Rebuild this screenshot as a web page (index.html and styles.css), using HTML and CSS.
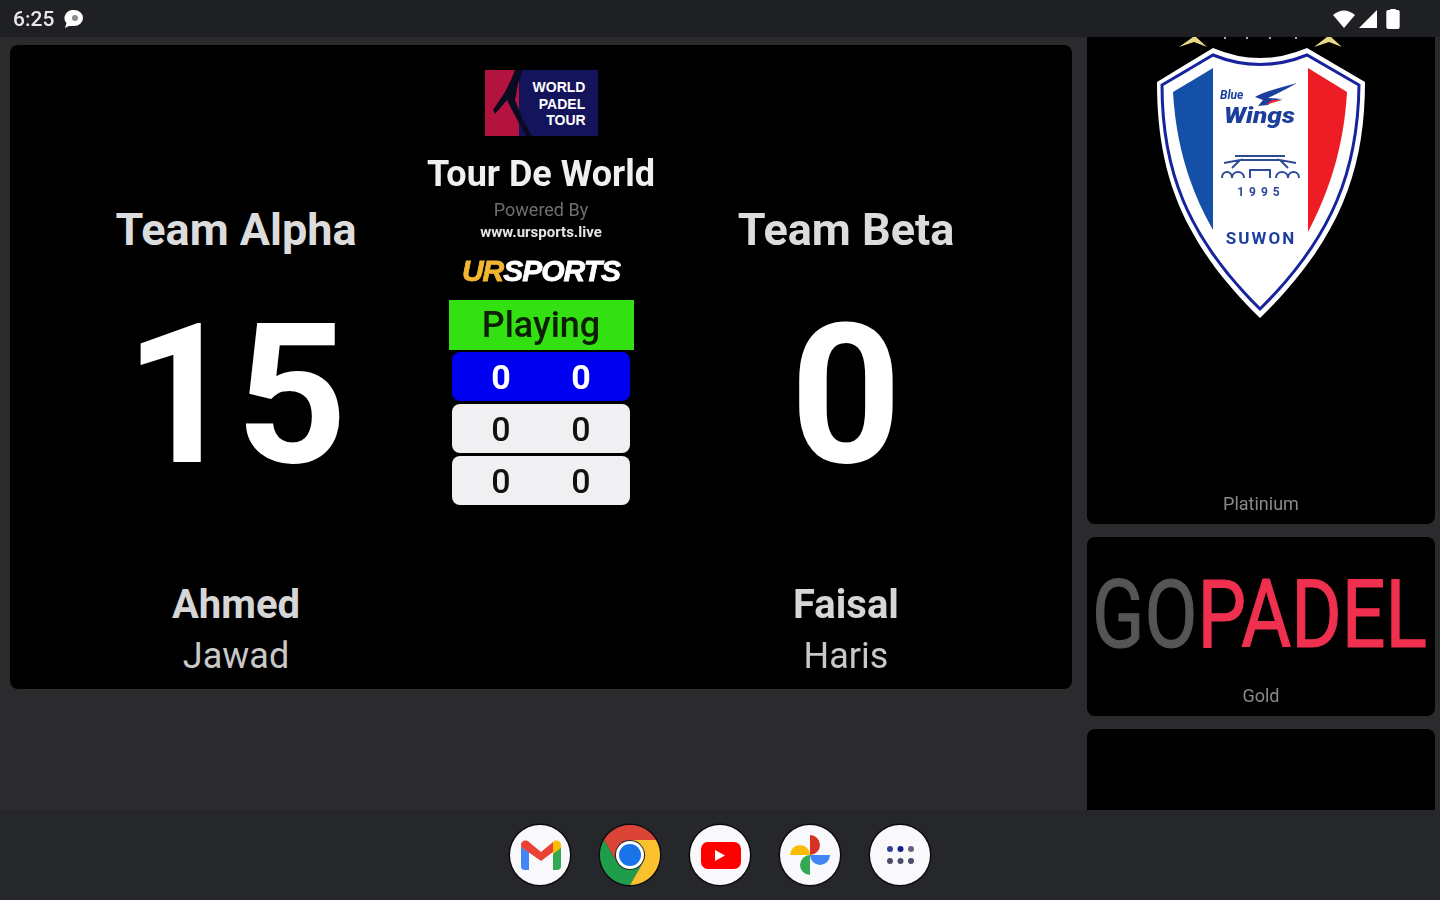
FILE: index.html
```html
<!DOCTYPE html>
<html lang="en">
<head>
  <meta charset="UTF-8" />
  <meta name="viewport" content="width=device-width, initial-scale=1.0" />
  <title>Scoreboard</title>
  <link rel="stylesheet" href="styles.css">
</head>
<body>
  <header class="status-bar">
    <div class="status-left">
      <span class="time">6:25</span>
      <svg class="chat-icon" viewBox="0 0 20 18">
        <path d="M10 0a9 8 0 0 1 0 16H5l-4 2 1.500-5A9 8 0 0 1 10 0z" fill="#fff"/>
        <circle cx="11" cy="8" r="3" fill="#8a8a8a"/>
      </svg>
    </div>
    <div class="status-right">
      <svg class="wifi-icon" viewBox="0 0 24 20"><path d="M1 6Q12-3 23 6L12 19Z" fill="#fff"/></svg>
      <svg class="signal-icon" viewBox="0 0 20 20"><path d="M19 1V19H1Z" fill="#fff"/></svg>
      <svg class="battery-icon" viewBox="0 0 14 22"><path d="M4 2V1H10V2H12A2 2 0 0 1 14 4V20A2 2 0 0 1 12 22H2A2 2 0 0 1 0 20V4A2 2 0 0 1 2 2Z" fill="#fff"/></svg>
    </div>
  </header>

  <main class="content">
    <section class="board">
      <div class="team">
        <h2 class="team-name">Team Alpha</h2>
        <div class="score">15</div>
        <div class="player-one">Ahmed</div>
        <div class="player-two">Jawad</div>
      </div>

      <div class="middle">
        <svg class="wpt-logo" viewBox="0 0 113 66">
          <rect width="113" height="66" fill="#14145c"/>
          <rect width="34" height="66" fill="#b5133f"/>
          <path d="M30 0H38L33 14L30 30L38 50L47 66H41L28 42L22 30L10 44L8 40L20 22L26 10Z" fill="#0a0a20"/>
          <text class="wpt-text" x="74" y="22" text-anchor="middle">WORLD</text>
          <text class="wpt-text" x="77" y="39" text-anchor="middle">PADEL</text>
          <text class="wpt-text" x="81" y="55" text-anchor="middle">TOUR</text>
        </svg>
        <h1 class="event-title">Tour De World</h1>
        <div class="powered">Powered By</div>
        <div class="site">www.ursports.live</div>
        <div class="ur-logo"><span class="ur">UR</span>SPORTS</div>
        <div class="state">Playing</div>
        <div class="set set-active"><span>0</span><span>0</span></div>
        <div class="set"><span>0</span><span>0</span></div>
        <div class="set"><span>0</span><span>0</span></div>
      </div>

      <div class="team">
        <h2 class="team-name">Team Beta</h2>
        <div class="score">0</div>
        <div class="player-one">Faisal</div>
        <div class="player-two">Haris</div>
      </div>
    </section>

    <aside class="sponsors">
      <div class="sponsor sponsor-platinum">
        <svg class="shield" viewBox="1087 37 348 290">
          <!-- stars above the crest -->
          <path d="M1179 47L1193 37H1196L1207 47L1194 42Z" fill="#e8d98a"/>
          <path d="M1314 47L1327 37H1331L1342 47L1329 42Z" fill="#e8d98a"/>
          <path d="M1225 37V39M1247 37V39M1270 37V39M1296 37V39" stroke="#ddd" stroke-width="1.500"/>
          <path d="M1213 48Q1260 68 1307 48L1365 82C1365 170 1340 240 1260 318C1180 240 1157 170 1157 82Z" fill="#fff"/>
          <path d="M1213 55Q1260 74 1307 55L1359 85C1358 168 1334 236 1260 309C1186 236 1162 168 1162 85Z" fill="none" stroke="#16239c" stroke-width="3"/>
          <path d="M1173 92L1213 68V230C1190 190 1176 145 1173 92Z" fill="#1450a8"/>
          <path d="M1308 68L1347 92C1344 145 1330 190 1308 232Z" fill="#ee1c25"/>
          <!-- wing -->
          <path d="M1297 83C1280 88 1262 92 1255 97L1263 100L1258 106L1268 105Q1272 100 1283 99L1268 98Q1285 90 1297 83Z" fill="#1c3f9e"/>
          <path d="M1265 105L1272 100H1282Z" fill="#e8252c"/>
          <text class="crest-blue" x="1220" y="99">Blue</text>
          <text class="crest-wings" x="1224" y="123" textLength="71" lengthAdjust="spacingAndGlyphs">Wings</text>
          <!-- gate -->
          <path d="M1235 156H1285M1240 160H1280M1224 163L1240 160L1232 168M1296 163L1280 160L1288 168M1222 178C1222 170 1232 170 1232 178C1232 170 1244 170 1244 178M1250 178V170H1270V178M1276 178C1276 170 1288 170 1288 178C1288 170 1299 170 1299 178" fill="none" stroke="#2c4a96" stroke-width="2"/>
          <text class="crest-year" x="1261" y="196" text-anchor="middle">1995</text>
          <text class="crest-city" x="1261" y="244" text-anchor="middle">SUWON</text>
        </svg>
        <div class="sponsor-label">Platinium</div>
      </div>

      <div class="sponsor sponsor-gold">
        <svg class="gopadel" viewBox="0 0 348 115">
          <text class="gopadel-text" transform="translate(5 90) scale(0.82 1)"><tspan class="gopadel-go">GO</tspan><tspan class="gopadel-padel">PADEL</tspan></text>
        </svg>
        <div class="sponsor-label">Gold</div>
      </div>

      <div class="sponsor sponsor-empty"></div>
    </aside>
  </main>

  <footer class="dock">
    <div class="dock-icon">
      <svg viewBox="0 0 60 60">
        <path d="M11 22V41A4 4 0 0 0 15 45H19V27Z" fill="#4285f4"/>
        <path d="M43 27V45H47A4 4 0 0 0 51 41V22Z" fill="#34a853"/>
        <path d="M11 24V20C11 16 16 14 19 17L31 27L43 17V27L31 36L11 22Z" fill="#ea4335"/>
        <path d="M43 17C46 14 51 16 51 20V23L43 29Z" fill="#fbbc04"/>
      </svg>
    </div>
    <div class="dock-icon dock-chrome">
      <svg viewBox="0 0 60 60">
        <path d="M4 15A30 30 0 0 1 56 15H30A15 15 0 0 0 17 37.500Z" fill="#db4437"/>
        <path d="M4 15L17 37.500A15 15 0 0 0 43 37.500L30 60A30 30 0 0 1 4 15Z" fill="#1e9e4a"/>
        <path d="M56 15H30A15 15 0 0 1 43 37.500L30 60A30 30 0 0 0 56 15Z" fill="#fbc02d"/>
        <circle cx="30" cy="30" r="14" fill="#fff"/>
        <circle cx="30" cy="30" r="11" fill="#1a73e8"/>
      </svg>
    </div>
    <div class="dock-icon">
      <svg viewBox="0 0 60 60">
        <rect x="11" y="17" width="40" height="27" rx="7" fill="#fe0000"/>
        <path d="M25 25L35 30.500L25 36Z" fill="#fff"/>
      </svg>
    </div>
    <div class="dock-icon">
      <svg viewBox="0 0 60 60">
        <path d="M30 10A10 10 0 0 1 30 30Z" fill="#d93025"/>
        <path d="M10 30A10 10 0 0 1 30 30Z" fill="#fbbc04"/>
        <path d="M30 30H50A10 10 0 0 1 30 30Z" fill="#4285f4"/>
        <path d="M30 30V50A10 10 0 0 1 30 30Z" fill="#34a853"/>
      </svg>
    </div>
    <div class="dock-icon">
      <svg viewBox="0 0 60 60">
        <circle cx="20" cy="24" r="3" fill="#34418f"/>
        <circle cx="30.500" cy="24" r="3" fill="#12208a"/>
        <circle cx="41" cy="24" r="3" fill="#6f5f7c"/>
        <circle cx="20" cy="36" r="3" fill="#4c4c6c"/>
        <circle cx="30.500" cy="36" r="3" fill="#4c4c6c"/>
        <circle cx="41" cy="36" r="3" fill="#4c4c6c"/>
      </svg>
    </div>
  </footer>
</body>
</html>
```

FILE: styles.css
```css
* {
  margin: 0;
  padding: 0;
  box-sizing: border-box;
  font-family: Roboto, 'Liberation Sans', sans-serif;
}

body {
  width: 1440px;
  height: 900px;
  overflow: hidden;
  display: flex;
  flex-direction: column;
  background: #2b2b2d;
  color: #fff;
}

/* the reference is an upscaled capture, so everything is a little soft */
.status-bar,
.content,
.dock {
  filter: blur(0.55px);
}

/* status bar */

.status-bar {
  height: 37px;
  display: flex;
  align-items: center;
  justify-content: space-between;
  background: #1f2024;
  padding: 0 40px 0 13px;
}

.status-left,
.status-right {
  display: flex;
  align-items: center;
}

.time {
  font-size: 21px;
  font-weight: 500;
  color: #e8e8e8;
}

.chat-icon {
  width: 20px;
  height: 18px;
  margin-left: 10px;
}

.wifi-icon {
  width: 24px;
  height: 20px;
}

.signal-icon {
  width: 20px;
  height: 20px;
  margin-left: 2px;
}

.battery-icon {
  width: 14px;
  height: 21px;
  margin-left: 8px;
}

/* main area */

.content {
  flex: 1;
  min-height: 0;
  display: flex;
}

.board {
  width: 1062px;
  height: 644px;
  margin: 8px 15px 0 10px;
  padding: 25px 34px 0;
  display: grid;
  grid-template-columns: 1fr 226px 1fr;
  background: #000;
  border-radius: 8px;
}

.team {
  display: flex;
  flex-direction: column;
  align-items: center;
  padding-top: 134px;
}

.team-name {
  font-size: 45px;
  line-height: 52px;
  font-weight: 700;
  color: #dcdcdc;
}

.score {
  margin-top: 38px;
  font-size: 194px;
  line-height: 204px;
  font-weight: 700;
}

.player-one {
  margin-top: 85px;
  font-size: 40px;
  line-height: 44px;
  font-weight: 700;
  color: #d6d6d6;
}

.player-two {
  margin-top: 8px;
  font-size: 36px;
  line-height: 42px;
  color: #c8c8c8;
}

.middle {
  display: flex;
  flex-direction: column;
  align-items: center;
}

.wpt-logo {
  width: 113px;
  height: 66px;
}

.wpt-text {
  font-family: 'Liberation Sans', sans-serif;
  font-size: 14px;
  font-weight: 700;
  fill: #fff;
}

.event-title {
  margin-top: 16px;
  font-size: 36px;
  line-height: 44px;
  font-weight: 700;
  color: #f0f0f0;
  white-space: nowrap;
}

.powered {
  margin-top: 2px;
  font-size: 18px;
  line-height: 24px;
  color: #6f6f6f;
}

.site {
  font-size: 15px;
  line-height: 20px;
  font-weight: 700;
  color: #e6e6e6;
}

.ur-logo {
  margin-top: 12px;
  height: 34px;
  font-family: 'Liberation Sans', sans-serif;
  font-size: 30px;
  line-height: 34px;
  font-weight: 700;
  font-style: italic;
  letter-spacing: -1px;
  color: #fff;
  -webkit-text-stroke: 0.8px #fff;
}

.ur {
  font-family: inherit;
  color: #f2b632;
  -webkit-text-stroke: 0.8px #f2b632;
}

.state {
  width: 185px;
  height: 50px;
  margin-top: 12px;
  text-align: center;
  font-size: 36px;
  line-height: 50px;
  font-weight: 500;
  color: #0d1f05;
  background: #33e011;
}

.set {
  width: 178px;
  height: 49px;
  margin-top: 3px;
  display: grid;
  grid-template-columns: 1fr 1fr;
  justify-items: center;
  align-items: center;
  padding: 0 9px;
  font-size: 34px;
  font-weight: 500;
  color: #111;
  background: #f0f0f2;
  border-radius: 8px;
}

.set-active {
  margin-top: 2px;
  font-weight: 700;
  color: #fff;
  background: #0000f0;
}

/* sponsors column */

.sponsors {
  width: 348px;
  display: flex;
  flex-direction: column;
  gap: 13px;
}

.sponsor {
  display: flex;
  flex-direction: column;
  align-items: center;
  background: #000;
  border-radius: 8px;
}

.sponsor-platinum {
  height: 487px;
  border-radius: 0 0 8px 8px;
  overflow: hidden;
}

.shield {
  width: 348px;
  height: 290px;
}

.sponsor-label {
  margin-top: auto;
  padding-bottom: 9px;
  font-size: 18px;
  line-height: 22px;
  color: #8a8a8a;
}

.crest-blue {
  font-size: 12px;
  font-weight: 700;
  font-style: italic;
  fill: #1c3f9e;
}

.crest-wings {
  font-size: 22px;
  font-weight: 900;
  font-style: italic;
  fill: #1c3f9e;
}

.crest-year {
  font-size: 12px;
  font-weight: 700;
  letter-spacing: 5px;
  fill: #2c4a96;
}

.crest-city {
  font-size: 17px;
  font-weight: 700;
  letter-spacing: 2px;
  fill: #1c3f9e;
}

.sponsor-gold {
  height: 179px;
}

.gopadel {
  width: 348px;
  height: 115px;
  margin-top: 20px;
}

.gopadel-text {
  font-size: 94px;
  stroke-width: 1.200px;
  stroke-linejoin: round;
}

.gopadel-go {
  fill: #555;
  stroke: #555;
}

.gopadel-padel {
  fill: #f0304f;
  stroke: #f0304f;
}

.sponsor-empty {
  flex: 1;
  border-radius: 8px 8px 0 0;
}

/* dock */

.dock {
  height: 90px;
  display: flex;
  align-items: center;
  justify-content: center;
  gap: 30px;
  background: #26272b;
}

.dock-icon {
  width: 60px;
  height: 60px;
  background: #f9f9fb;
  border-radius: 50%;
  box-shadow: 0 0 0 1.500px #0c0c0e;
}

.dock-chrome {
  background: transparent;
}

.dock-icon svg {
  display: block;
  width: 60px;
  height: 60px;
}
```
